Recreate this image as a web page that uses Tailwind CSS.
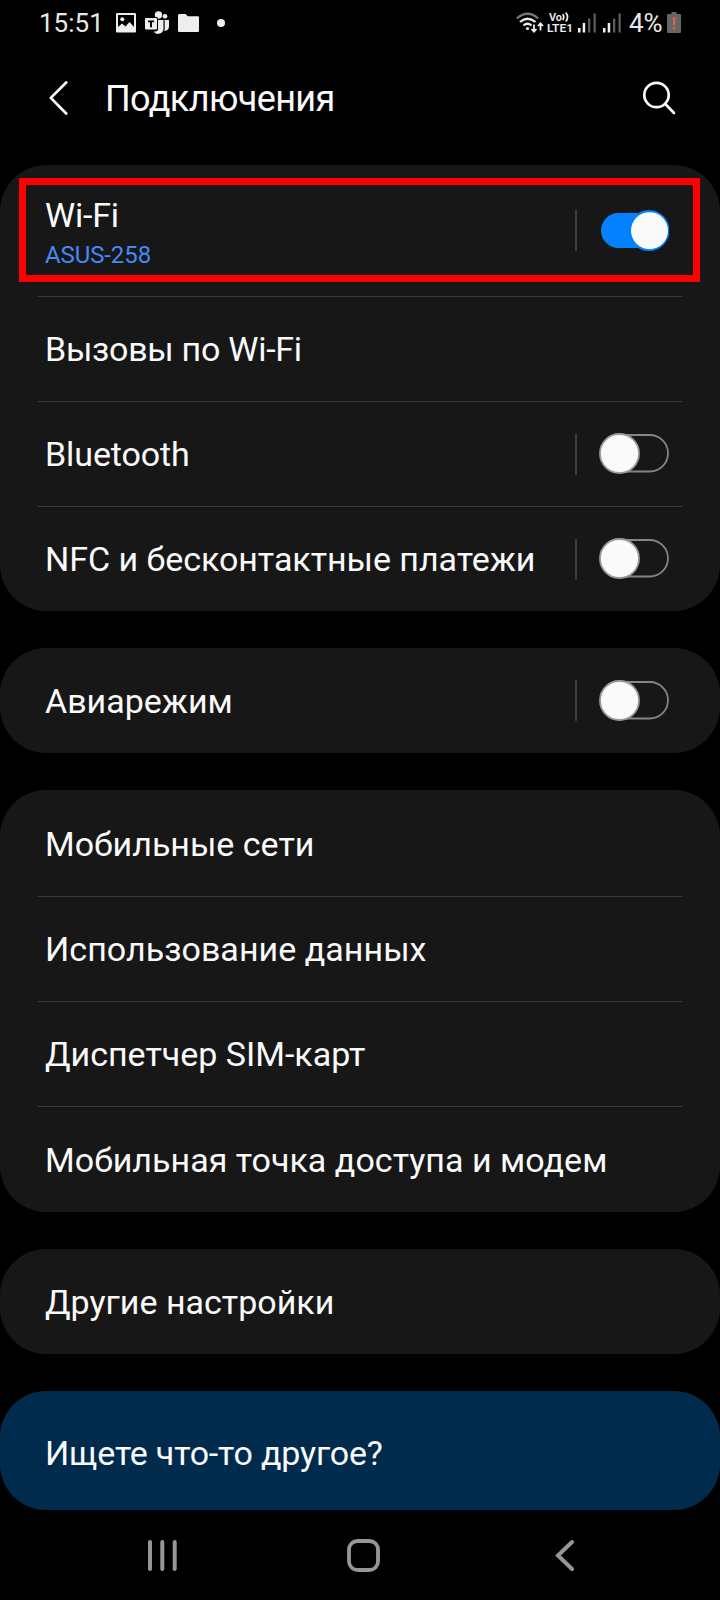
<!DOCTYPE html>
<html lang="ru">
<head>
<meta charset="utf-8">
<title>Подключения</title>
<script src="https://cdn.jsdelivr.net/npm/@tailwindcss/browser@4"></script>
</head>
<body class="bg-black">
<svg class="hidden">
  <symbol id="off" viewBox="0 0 70 42">
    <rect x="2" y="2" width="67" height="36.500" rx="18.250" fill="none" stroke="#858585" stroke-width="1.800"/>
    <circle cx="20.500" cy="20.500" r="19.500" fill="#fafafa" stroke="#9a9a9a" stroke-width="1.800"/>
  </symbol>
  <symbol id="on" viewBox="0 0 70 42">
    <rect x="2" y="3" width="67" height="35" rx="17.500" fill="#0381fe"/>
    <circle cx="50" cy="20.500" r="20.500" fill="#0381fe"/>
    <circle cx="50.500" cy="20.700" r="18.500" fill="#fafafa"/>
  </symbol>
  <symbol id="signal" viewBox="0 0 19 20">
    <path d="M0 15h2.500v4.500h-2.500zM4.700 10h2.500v9.500h-2.500z" fill="#f0f0f0"/>
    <path d="M10 5.500h2.300v14h-2.300zM15.500 .500h2.300v19h-2.300z" fill="#5c5c5c"/>
  </symbol>
</svg>
<div class="flex h-[1600px] w-[720px] flex-col overflow-hidden bg-black font-[Roboto,sans-serif] text-[34px] leading-10 whitespace-nowrap text-[#fafafa]">
  <div class="flex h-[46px] items-center pr-[39px] pl-[39px] text-[26px] text-[#e8e8e8]">
    <span class="w-[77px]">15:51</span>
    <svg class="h-5 w-5" viewBox="0 0 20 20"><path fill-rule="evenodd" fill="#eee" d="M1 0h18q1 0 1 1v17.500q0 1-1 1h-18q-1 0-1-1v-17.500q0-1 1-1zM2 2v12l4-3.500 3.500 3 4-4.500 4.500 5v-12z"/><circle cx="6.300" cy="6.300" r="2" fill="#eee"/></svg>
    <svg class="ml-[9px] h-6 w-6" viewBox="0 0 24 24"><circle cx="13.500" cy="4" r="3.700" fill="#eee"/><circle cx="20" cy="5.200" r="2.300" fill="#eee"/><path fill="#eee" d="M13 9h5.500v8a5.500 5.500 0 0 1-10 3.500q4.500 0 4.500-2zM19.700 9h3.800q.5 0 .5.500v6q0 4-4.800 4.500.500-1 .500-3z"/><rect x="-.500" y="6" width="13.500" height="13" rx="1.500" fill="#000"/><rect x="0" y="7" width="12" height="11.500" rx="1" fill="#eee"/><path d="M3 9.500h6v1.800h-2v5h-2v-5h-2z" fill="#000"/></svg>
    <svg class="ml-[9px] h-[18px] w-[21px]" viewBox="0 0 21 18"><path fill="#eee" d="M1.200 0h6.300l2.200 2.200h10q1.300 0 1.300 1.300v13q0 1.500-1.300 1.500h-18.500q-1.200 0-1.200-1.500v-15q0-1.500 1.200-1.500z"/></svg>
    <span class="ml-[18px] h-2 w-2 rounded-full bg-[#eee]"></span>
    <svg class="mt-[-2px] ml-auto h-[21px] w-7" viewBox="0 0 28 21" fill="none" stroke-width="2.200"><path d="M.800 6.500q10.700-9.500 21.400 0" stroke="#777"/><path d="M4 10q7.500-6.500 15.500 0M7.500 13.500q4-3.500 8 0" stroke="#eee"/><circle cx="11.500" cy="16.500" r="1.600" fill="#eee"/><path d="M18 12.500v7M15.500 17l2.500 2.700 2.500-2.700M24.500 18.500v-7M22 14l2.500-2.700 2.500 2.700" stroke="#eee" stroke-width="1.800"/></svg>
    <svg class="ml-[2px] h-6 w-[28px] overflow-visible" viewBox="0 0 28 24" fill="#eee" font-family="Roboto" font-weight="600" font-size="11.500"><text x="3" y="9.800" textLength="13" lengthAdjust="spacingAndGlyphs">Vo</text><text x="1" y="21.300" textLength="26" lengthAdjust="spacingAndGlyphs">LTE1</text><path d="M16.800 3q2 3 0 6M19.800 1.500q3.500 4.500 0 9" fill="none" stroke="#eee" stroke-width="1.700"/></svg>
    <svg class="ml-[4px] h-5 w-[19px]"><use href="#signal"/></svg>
    <svg class="ml-[6px] h-5 w-[19px]"><use href="#signal"/></svg>
    <span class="ml-[7px] w-[38px]">4%</span>
    <svg class="mt-[-1px] h-[21px] w-[14px]" viewBox="0 0 14 21"><path fill="#666" d="M4.500 0h5v2h3.500q1 0 1 1v17q0 1-1 1h-12q-1 0-1-1v-17q0-1 1-1h3.500z"/><path fill="#e8604c" d="M5.800 5h2.600l-.4 8h-1.800zM5.800 15h2.500v2.500h-2.500z"/></svg>
  </div>
  <header class="mb-[14px] flex h-[105px] items-center pr-[43px] pl-[49px] text-4xl">
    <svg class="h-9 w-5" viewBox="0 0 20 36" fill="none" stroke="#fafafa" stroke-width="2.700" stroke-linecap="round" stroke-linejoin="round"><path d="M17.200 1.500l-15.400 15.400 15.400 15.600"/></svg>
    <h1 class="ml-9 tracking-[-0.6px]">Подключения</h1>
    <svg class="ml-auto h-9 w-[35px]" viewBox="0 0 35 36" fill="none" stroke="#fafafa" stroke-width="2.700" stroke-linecap="round"><circle cx="14.500" cy="14" r="12.200"/><path d="M23.300 23l8.700 9"/></svg>
  </header>
  <main class="flex flex-col gap-[37px]">
    <section class="relative h-[446px] rounded-[46px] bg-[#171717]">
      <div class="mx-[38px] flex h-[132px] items-center border-b border-[#3a3a3a] pr-[13px] pl-[7px]">
        <div class="flex flex-col pt-[8px]"><span class="tracking-[-0.2px]">Wi-Fi</span><span class="text-2xl leading-[40px] tracking-[-0.1px] text-[#4489f5]">ASUS-258</span></div>
        <span class="ml-auto h-[41px] w-[2px] bg-[#3d3d3d]"></span><svg class="ml-[22px] h-[42px] w-[70px]"><use href="#on"/></svg>
      </div>
      <div class="mx-[38px] flex h-[105px] items-center border-b border-[#3a3a3a] pl-[7px] tracking-[-0.27px]">Вызовы по Wi-Fi</div>
      <div class="mx-[38px] flex h-[105px] items-center border-b border-[#3a3a3a] pr-[13px] pl-[7px] tracking-[-0.1px]">Bluetooth<span class="ml-auto h-[41px] w-[2px] bg-[#3d3d3d]"></span><svg class="ml-[22px] h-[42px] w-[70px]"><use href="#off"/></svg></div>
      <div class="mx-[38px] flex h-[104px] items-center pr-[13px] pl-[7px] tracking-[-0.04px]">NFC и бесконтактные платежи<span class="ml-auto h-[41px] w-[2px] bg-[#3d3d3d]"></span><svg class="ml-[22px] h-[42px] w-[70px]"><use href="#off"/></svg></div>
      <div class="absolute top-[13px] left-[19px] h-[104px] w-[681px] border-[7px] border-[#ff0000]"></div>
    </section>
    <section class="flex h-[105px] items-center rounded-[46px] bg-[#171717] pr-[51px] pl-[45px]"><span>Авиарежим</span><span class="ml-auto h-[41px] w-[2px] bg-[#3d3d3d]"></span><svg class="ml-[22px] h-[42px] w-[70px]"><use href="#off"/></svg></section>
    <section class="h-[422px] rounded-[46px] bg-[#171717]">
      <div class="mx-[38px] flex h-[107px] items-center border-b border-[#3a3a3a] pt-[2px] pl-[7px]">Мобильные сети</div>
      <div class="mx-[38px] flex h-[105px] items-center border-b border-[#3a3a3a] pl-[7px] tracking-[0.04px]">Использование данных</div>
      <div class="mx-[38px] flex h-[105px] items-center border-b border-[#3a3a3a] pl-[7px]">Диспетчер SIM-карт</div>
      <div class="mx-[38px] flex h-[105px] items-center pl-[7px] tracking-[0.03px]">Мобильная точка доступа и модем</div>
    </section>
    <section class="flex h-[105px] items-center rounded-[46px] bg-[#171717] pl-[45px]">Другие настройки</section>
    <section class="flex h-[119px] items-center rounded-[46px] bg-[#002b4d] pt-[4px] pl-[45px] tracking-[-0.18px]">Ищете что-то другое?</section>
  </main>
  <nav class="flex h-[90px] items-center pl-[146px]">
    <svg class="h-9 w-[34px]" viewBox="0 0 34 36" stroke="#969696" stroke-width="4" stroke-linecap="round"><path d="M4 5v27M16.300 5v27M28.700 5v27"/></svg>
    <svg class="ml-[165px] h-9 w-9" viewBox="0 0 36 36" fill="none" stroke="#969696" stroke-width="3.800"><rect x="4" y="4" width="29" height="29" rx="8.500"/></svg>
    <svg class="ml-[173px] h-9 w-[22px]" viewBox="0 0 22 36" fill="none" stroke="#969696" stroke-width="4" stroke-linecap="round"><path d="M18 5l-14 13.500 14 13.500"/></svg>
  </nav>
</div>
</body>
</html>
